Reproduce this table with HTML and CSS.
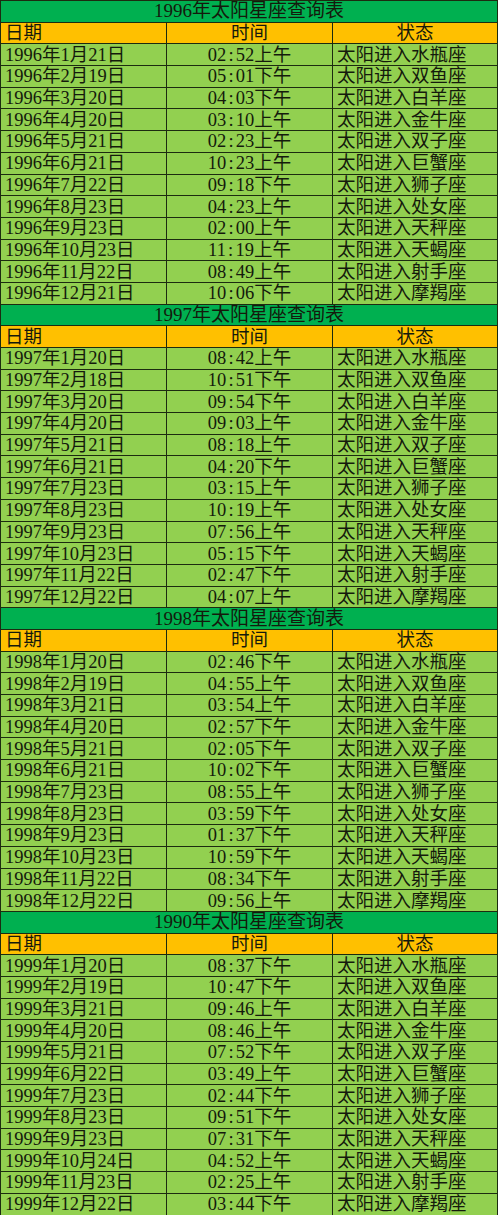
FILE: index.html
```html
<!DOCTYPE html>
<html lang="zh">
<head>
<meta charset="utf-8">
<title>太阳星座查询表</title>
<link rel="stylesheet" href="styles.css">
</head>
<body>
<table class="sheet">
<colgroup><col class="c1"><col class="c2"><col class="c3"></colgroup>
<tbody>
<tr class="title"><td colspan="3">1996年太阳星座查询表</td></tr>
<tr class="head"><td>日期</td><td class="mid">时间</td><td class="mid">状态</td></tr>
<tr><td>1996年1月21日</td><td class="mid">02<i>:</i>52上午</td><td>太阳进入水瓶座</td></tr>
<tr><td>1996年2月19日</td><td class="mid">05<i>:</i>01下午</td><td>太阳进入双鱼座</td></tr>
<tr><td>1996年3月20日</td><td class="mid">04<i>:</i>03下午</td><td>太阳进入白羊座</td></tr>
<tr><td>1996年4月20日</td><td class="mid">03<i>:</i>10上午</td><td>太阳进入金牛座</td></tr>
<tr><td>1996年5月21日</td><td class="mid">02<i>:</i>23上午</td><td>太阳进入双子座</td></tr>
<tr><td>1996年6月21日</td><td class="mid">10<i>:</i>23上午</td><td>太阳进入巨蟹座</td></tr>
<tr><td>1996年7月22日</td><td class="mid">09<i>:</i>18下午</td><td>太阳进入狮子座</td></tr>
<tr><td>1996年8月23日</td><td class="mid">04<i>:</i>23上午</td><td>太阳进入处女座</td></tr>
<tr><td>1996年9月23日</td><td class="mid">02<i>:</i>00上午</td><td>太阳进入天秤座</td></tr>
<tr><td>1996年10月23日</td><td class="mid">11<i>:</i>19上午</td><td>太阳进入天蝎座</td></tr>
<tr><td>1996年11月22日</td><td class="mid">08<i>:</i>49上午</td><td>太阳进入射手座</td></tr>
<tr><td>1996年12月21日</td><td class="mid">10<i>:</i>06下午</td><td>太阳进入摩羯座</td></tr>

<tr class="title"><td colspan="3">1997年太阳星座查询表</td></tr>
<tr class="head"><td>日期</td><td class="mid">时间</td><td class="mid">状态</td></tr>
<tr><td>1997年1月20日</td><td class="mid">08<i>:</i>42上午</td><td>太阳进入水瓶座</td></tr>
<tr><td>1997年2月18日</td><td class="mid">10<i>:</i>51下午</td><td>太阳进入双鱼座</td></tr>
<tr><td>1997年3月20日</td><td class="mid">09<i>:</i>54下午</td><td>太阳进入白羊座</td></tr>
<tr><td>1997年4月20日</td><td class="mid">09<i>:</i>03上午</td><td>太阳进入金牛座</td></tr>
<tr><td>1997年5月21日</td><td class="mid">08<i>:</i>18上午</td><td>太阳进入双子座</td></tr>
<tr><td>1997年6月21日</td><td class="mid">04<i>:</i>20下午</td><td>太阳进入巨蟹座</td></tr>
<tr><td>1997年7月23日</td><td class="mid">03<i>:</i>15上午</td><td>太阳进入狮子座</td></tr>
<tr><td>1997年8月23日</td><td class="mid">10<i>:</i>19上午</td><td>太阳进入处女座</td></tr>
<tr><td>1997年9月23日</td><td class="mid">07<i>:</i>56上午</td><td>太阳进入天秤座</td></tr>
<tr><td>1997年10月23日</td><td class="mid">05<i>:</i>15下午</td><td>太阳进入天蝎座</td></tr>
<tr><td>1997年11月22日</td><td class="mid">02<i>:</i>47下午</td><td>太阳进入射手座</td></tr>
<tr><td>1997年12月22日</td><td class="mid">04<i>:</i>07上午</td><td>太阳进入摩羯座</td></tr>

<tr class="title"><td colspan="3">1998年太阳星座查询表</td></tr>
<tr class="head"><td>日期</td><td class="mid">时间</td><td class="mid">状态</td></tr>
<tr><td>1998年1月20日</td><td class="mid">02<i>:</i>46下午</td><td>太阳进入水瓶座</td></tr>
<tr><td>1998年2月19日</td><td class="mid">04<i>:</i>55上午</td><td>太阳进入双鱼座</td></tr>
<tr><td>1998年3月21日</td><td class="mid">03<i>:</i>54上午</td><td>太阳进入白羊座</td></tr>
<tr><td>1998年4月20日</td><td class="mid">02<i>:</i>57下午</td><td>太阳进入金牛座</td></tr>
<tr><td>1998年5月21日</td><td class="mid">02<i>:</i>05下午</td><td>太阳进入双子座</td></tr>
<tr><td>1998年6月21日</td><td class="mid">10<i>:</i>02下午</td><td>太阳进入巨蟹座</td></tr>
<tr><td>1998年7月23日</td><td class="mid">08<i>:</i>55上午</td><td>太阳进入狮子座</td></tr>
<tr><td>1998年8月23日</td><td class="mid">03<i>:</i>59下午</td><td>太阳进入处女座</td></tr>
<tr><td>1998年9月23日</td><td class="mid">01<i>:</i>37下午</td><td>太阳进入天秤座</td></tr>
<tr><td>1998年10月23日</td><td class="mid">10<i>:</i>59下午</td><td>太阳进入天蝎座</td></tr>
<tr><td>1998年11月22日</td><td class="mid">08<i>:</i>34下午</td><td>太阳进入射手座</td></tr>
<tr><td>1998年12月22日</td><td class="mid">09<i>:</i>56上午</td><td>太阳进入摩羯座</td></tr>

<tr class="title"><td colspan="3">1990年太阳星座查询表</td></tr>
<tr class="head"><td>日期</td><td class="mid">时间</td><td class="mid">状态</td></tr>
<tr><td>1999年1月20日</td><td class="mid">08<i>:</i>37下午</td><td>太阳进入水瓶座</td></tr>
<tr><td>1999年2月19日</td><td class="mid">10<i>:</i>47下午</td><td>太阳进入双鱼座</td></tr>
<tr><td>1999年3月21日</td><td class="mid">09<i>:</i>46上午</td><td>太阳进入白羊座</td></tr>
<tr><td>1999年4月20日</td><td class="mid">08<i>:</i>46上午</td><td>太阳进入金牛座</td></tr>
<tr><td>1999年5月21日</td><td class="mid">07<i>:</i>52下午</td><td>太阳进入双子座</td></tr>
<tr><td>1999年6月22日</td><td class="mid">03<i>:</i>49上午</td><td>太阳进入巨蟹座</td></tr>
<tr><td>1999年7月23日</td><td class="mid">02<i>:</i>44下午</td><td>太阳进入狮子座</td></tr>
<tr><td>1999年8月23日</td><td class="mid">09<i>:</i>51下午</td><td>太阳进入处女座</td></tr>
<tr><td>1999年9月23日</td><td class="mid">07<i>:</i>31下午</td><td>太阳进入天秤座</td></tr>
<tr><td>1999年10月24日</td><td class="mid">04<i>:</i>52上午</td><td>太阳进入天蝎座</td></tr>
<tr><td>1999年11月23日</td><td class="mid">02<i>:</i>25上午</td><td>太阳进入射手座</td></tr>
<tr><td>1999年12月22日</td><td class="mid">03<i>:</i>44下午</td><td>太阳进入摩羯座</td></tr>
</tbody>
</table>
</body>
</html>
```
FILE: styles.css
```css
html, body {
  margin: 0;
  padding: 0;
  background: #ffffff;
}
.sheet {
  border-collapse: collapse;
  table-layout: fixed;
  width: 497px;
  font-family: "Liberation Serif", "Noto Sans CJK SC", serif;
  font-size: 18.5px;
  color: #141a0c;
}
.sheet .c1 { width: 166px; }
.sheet .c2 { width: 166px; }
.sheet .c3 { width: 165px; }
.sheet td {
  height: 20.7px;
  padding: 0 0 0 4px;
  border: 1px solid #1c2b10;
  background: #92d050;
  line-height: 20px;
  white-space: nowrap;
  overflow: hidden;
  vertical-align: middle;
}
.sheet td i {
  font-style: normal;
  display: inline-block;
  width: 9.5px;
  text-align: center;
}
.sheet td.mid {
  text-align: center;
  padding: 0;
}
.sheet .title td {
  background: #00b050;
  text-align: center;
  font-size: 19px;
  padding: 0;
}
.sheet .head td {
  background: #ffc000;
}
```
